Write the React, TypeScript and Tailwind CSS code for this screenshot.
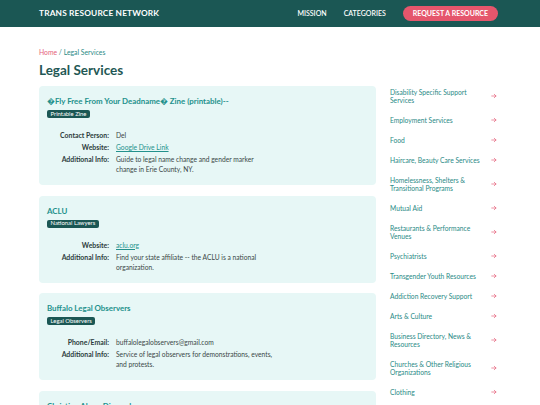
import React from "react";

const categories = [
  "Disability Specific Support Services",
  "Employment Services",
  "Food",
  "Haircare, Beauty Care Services",
  "Homelessness, Shelters & Transitional Programs",
  "Mutual Aid",
  "Restaurants & Performance Venues",
  "Psychiatrists",
  "Transgender Youth Resources",
  "Addiction Recovery Support",
  "Arts & Culture",
  "Business Directory, News & Resources",
  "Churches & Other Religious Organizations",
  "Clothing",
];

type Row = { label: string; value: string; link?: boolean };
type Card = { title: string; badge: string; rows: Row[] };

const cards: Card[] = [
  {
    title: "\uFFFDFly Free From Your Deadname\uFFFD Zine (printable)--",
    badge: "Printable Zine",
    rows: [
      { label: "Contact Person:", value: "Del" },
      { label: "Website:", value: "Google Drive Link", link: true },
      {
        label: "Additional Info:",
        value: "Guide to legal name change and gender marker change in Erie County, NY.",
      },
    ],
  },
  {
    title: "ACLU",
    badge: "National Lawyers",
    rows: [
      { label: "Website:", value: "aclu.org", link: true },
      {
        label: "Additional Info:",
        value: "Find your state affiliate -- the ACLU is a national organization.",
      },
    ],
  },
  {
    title: "Buffalo Legal Observers",
    badge: "Legal Observers",
    rows: [
      { label: "Phone/Email:", value: "buffalolegalobservers@gmail.com" },
      {
        label: "Additional Info:",
        value: "Service of legal observers for demonstrations, events, and protests.",
      },
    ],
  },
  {
    title: "Christian Alone Dinnerdance",
    badge: "Lawyers",
    rows: [{ label: "Website:", value: "example.org", link: true }],
  },
];

function Arrow() {
  return (
    <svg width="6" height="6" viewBox="0 0 24 24" fill="none" stroke="#e5607a" strokeWidth="2.8" strokeLinecap="round" strokeLinejoin="round">
      <path d="M3 12h17" />
      <path d="M13 5l7 7-7 7" />
    </svg>
  );
}

export default function App() {
  return (
    <div className="min-h-screen bg-white font-['Lato','Noto_Sans',sans-serif]">
      <header className="h-[27px] bg-[#1b5754]">
        <div className="mx-auto flex h-full w-[462px] items-center justify-between">
          <div className="text-[8.3px] font-bold tracking-[0.02em] text-white">TRANS RESOURCE NETWORK</div>
          <nav className="mr-[3px] flex items-center">
            <span className="text-[7px] font-semibold text-white">MISSION</span>
            <span className="ml-[17px] text-[7px] font-semibold text-white">CATEGORIES</span>
            <span className="ml-[17px] flex h-[15px] items-center rounded-full bg-[#e5566c] px-[10px] text-[7px] font-bold text-white">
              REQUEST A RESOURCE
            </span>
          </nav>
        </div>
      </header>

      <main className="mx-auto w-[462px] pt-[20px]">
        <div className="text-[6.8px] leading-[10px]">
          <span className="text-[#e5607a]">Home</span>
          <span className="text-[#2a8a86]"> / Legal Services</span>
        </div>
        <h1 className="mt-[4px] text-[13.5px] font-bold leading-[18px] text-[#1f5855]">Legal Services</h1>

        <div className="mt-[7px] flex gap-[14px]">
          <div className="flex w-[337px] flex-col gap-[10.5px]">
            {cards.map((c) => (
              <div key={c.title} className="rounded-[4px] bg-[#e7f7f6] px-[8px] pt-[9px] pb-[11px]">
                <div className="text-[7.9px] font-bold leading-[12px] text-[#23918c]">{c.title}</div>
                <div className="mt-[3px] flex">
                  <span className="flex h-[8px] items-center rounded-[2px] bg-[#1b5754] px-[3.5px] text-[5.9px] text-white">
                    {c.badge}
                  </span>
                </div>
                <div className="mt-[12px] flex flex-col gap-[2px]">
                  {c.rows.map((r) => (
                    <div key={r.label} className="flex leading-[10px]">
                      <div className="w-[62px] shrink-0 text-right text-[6.9px] font-bold text-[#2c3b3b]">{r.label}</div>
                      <div
                        className={
                          "ml-[7px] w-[157px] text-[6.7px] " + (r.link ? "text-[#23918c] underline" : "text-[#3b4747]")
                        }
                      >
                        {r.value}
                      </div>
                    </div>
                  ))}
                </div>
              </div>
            ))}
          </div>

          <div className="-mt-[4px] w-[111px]">
            {categories.map((cat) => (
              <div key={cat} className="flex items-center py-[6px]">
                <div className="w-[101px] shrink-0 text-[6.7px] leading-[8px] text-[#2a8a86]">{cat}</div>
                <Arrow />
              </div>
            ))}
          </div>
        </div>
      </main>
    </div>
  );
}
